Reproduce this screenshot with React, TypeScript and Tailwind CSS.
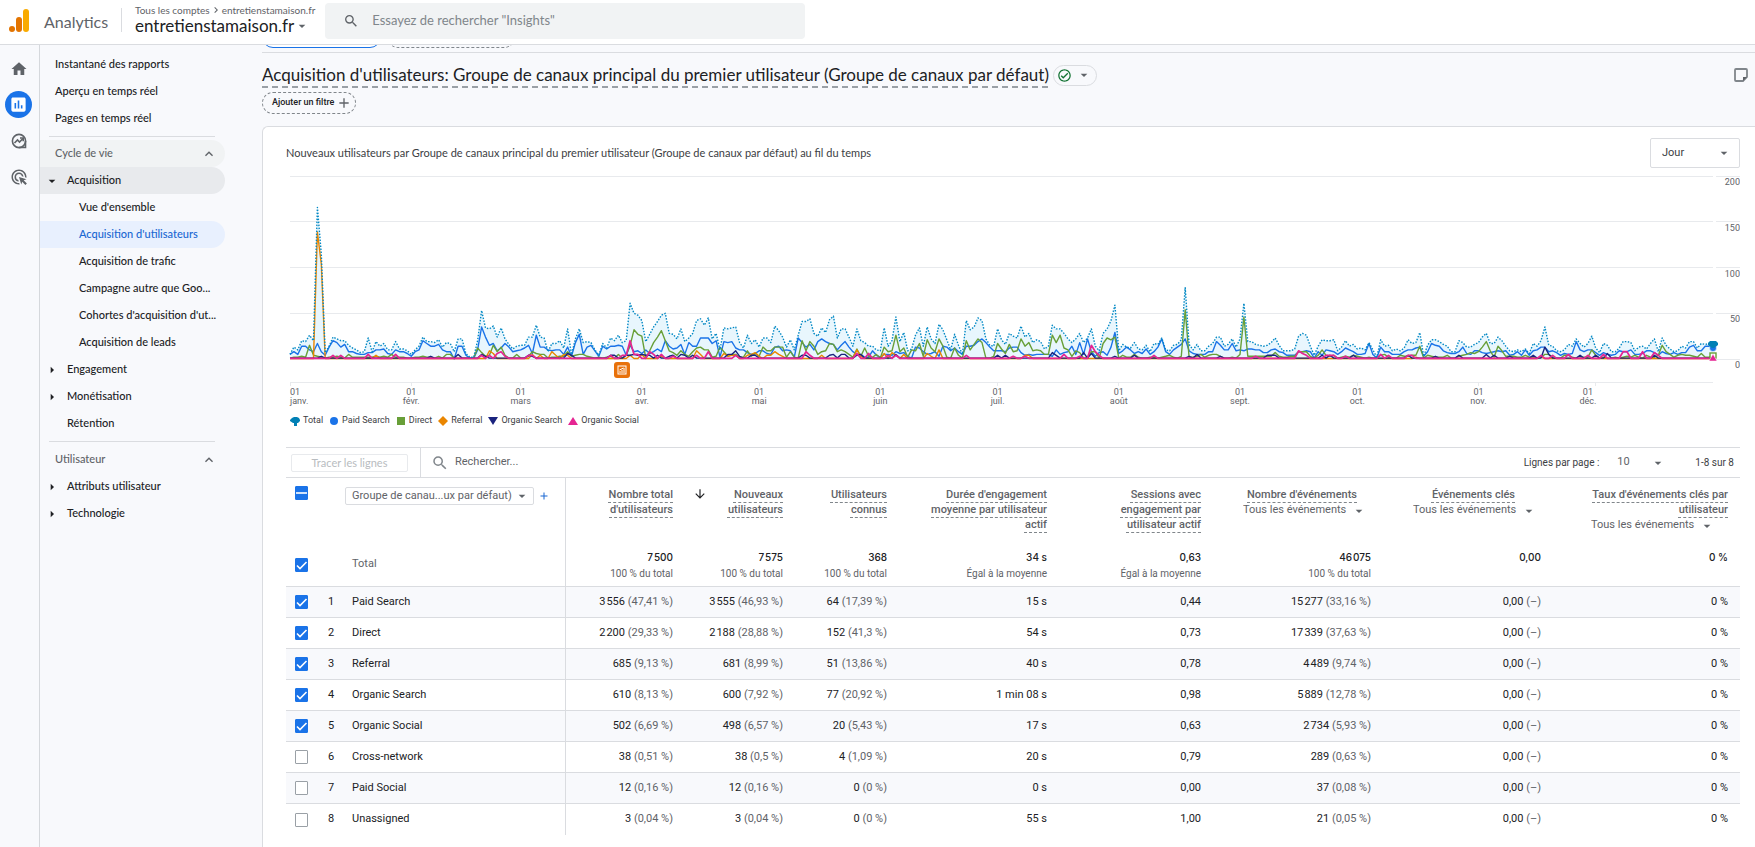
import React from 'react';
import {
  MdAdd,
  MdAdsClick,
  MdArrowDownward,
  MdArrowDropDown,
  MdArrowRight,
  MdHome,
  MdInsertChart,
  MdKeyboardArrowRight,
  MdKeyboardArrowUp,
  MdOutlineCheckCircle,
  MdSearch,
} from 'react-icons/md';
import clsx from 'clsx';

// ---------- chart data, one value per day from 1 January ----------

const TOTAL = [
  5, 13, 10, 20, 19, 26, 20, 166, 115, 7, 14, 24, 22, 20, 20, 15, 12, 10, 7, 8,
  23, 8, 19, 14, 17, 10, 10, 19, 11, 11, 9, 5, 10, 14, 24, 19, 19, 18, 21, 13,
  18, 17, 8, 22, 22, 6, 2, 2, 20, 53, 34, 33, 36, 24, 34, 22, 16, 11, 14, 15,
  15, 24, 24, 37, 24, 23, 8, 17, 17, 20, 12, 33, 5, 22, 33, 18, 19, 18, 10, 4,
  17, 12, 23, 20, 26, 18, 20, 61, 50, 48, 42, 19, 27, 35, 41, 48, 50, 28, 27, 22,
  33, 19, 23, 28, 42, 44, 37, 45, 22, 28, 10, 34, 33, 34, 35, 18, 12, 26, 17, 21,
  13, 23, 23, 18, 36, 31, 24, 13, 21, 10, 26, 41, 41, 44, 28, 25, 34, 29, 43, 47,
  23, 33, 33, 24, 14, 33, 20, 18, 14, 14, 10, 9, 34, 14, 20, 46, 19, 29, 9, 11,
  26, 34, 14, 35, 22, 17, 38, 32, 21, 10, 27, 15, 5, 42, 32, 35, 45, 42, 22, 15,
  14, 33, 21, 16, 28, 25, 23, 36, 24, 28, 18, 21, 19, 11, 14, 37, 33, 33, 28, 22,
  18, 22, 28, 18, 23, 33, 14, 9, 28, 33, 42, 59, 9, 16, 13, 12, 18, 11, 10, 15,
  8, 17, 16, 23, 10, 9, 15, 16, 21, 78, 16, 10, 16, 9, 9, 14, 17, 24, 24, 14,
  16, 22, 13, 22, 61, 19, 19, 16, 15, 14, 15, 18, 23, 15, 9, 9, 9, 11, 25, 28,
  26, 14, 4, 14, 21, 20, 20, 21, 9, 13, 20, 14, 16, 11, 12, 10, 18, 10, 2, 21,
  14, 15, 9, 11, 9, 12, 21, 17, 18, 29, 3, 15, 21, 21, 19, 16, 14, 8, 8, 20,
  18, 13, 13, 16, 18, 24, 28, 17, 17, 24, 20, 14, 9, 8, 10, 8, 11, 6, 17, 14,
  20, 35, 15, 14, 9, 8, 10, 16, 14, 22, 17, 13, 17, 25, 12, 7, 17, 15, 8, 8,
  12, 19, 19, 18, 9, 13, 14, 11, 17, 22, 8, 23, 15, 11, 8, 9, 14, 12, 19, 19,
  12, 17, 16, 17, 17,
];

const PAID_SEARCH = [
  5, 8, 5, 14, 14, 10, 8, 17, 8, 4, 13, 20, 18, 13, 16, 8, 8, 6, 5, 5,
  7, 7, 10, 10, 11, 6, 5, 10, 8, 8, 6, 3, 8, 10, 20, 17, 14, 14, 16, 10,
  8, 8, 0, 14, 14, 4, 1, 1, 10, 35, 24, 15, 17, 9, 12, 17, 13, 8, 9, 10,
  12, 15, 6, 26, 13, 13, 10, 9, 10, 10, 5, 13, 3, 18, 27, 5, 13, 15, 9, 3,
  14, 11, 14, 14, 15, 14, 4, 15, 8, 9, 6, 10, 6, 8, 11, 8, 20, 14, 11, 12,
  16, 5, 18, 14, 14, 23, 23, 23, 17, 20, 2, 19, 18, 19, 12, 10, 10, 7, 5, 6,
  9, 9, 6, 5, 13, 14, 9, 10, 9, 2, 23, 18, 13, 16, 10, 19, 22, 19, 17, 16,
  10, 15, 19, 13, 8, 5, 5, 2, 2, 9, 4, 2, 5, 5, 4, 8, 6, 7, 3, 1,
  13, 12, 8, 5, 6, 8, 3, 14, 13, 9, 12, 8, 5, 14, 14, 15, 19, 22, 18, 13,
  9, 9, 9, 8, 12, 13, 13, 7, 4, 5, 4, 5, 5, 5, 5, 3, 10, 5, 7, 8,
  14, 5, 18, 5, 22, 8, 3, 7, 8, 4, 13, 29, 6, 9, 13, 10, 6, 8, 6, 11,
  5, 8, 13, 22, 8, 5, 10, 13, 16, 22, 9, 6, 5, 5, 5, 8, 8, 19, 15, 10,
  10, 17, 9, 10, 9, 11, 11, 10, 10, 7, 7, 10, 11, 8, 7, 4, 4, 4, 8, 8,
  9, 8, 1, 8, 4, 10, 9, 8, 5, 8, 12, 10, 8, 5, 5, 6, 17, 5, 1, 13,
  8, 8, 5, 5, 5, 8, 10, 10, 12, 13, 3, 8, 17, 15, 14, 9, 7, 6, 6, 8,
  13, 6, 5, 9, 9, 7, 6, 7, 8, 9, 8, 9, 4, 5, 8, 4, 10, 4, 9, 10,
  13, 13, 8, 9, 7, 4, 6, 5, 6, 19, 10, 8, 10, 10, 7, 4, 7, 5, 4, 5,
  9, 8, 8, 10, 5, 5, 6, 9, 9, 7, 4, 8, 6, 5, 7, 5, 7, 7, 13, 15,
  9, 9, 14, 14, 12,
];

const DIRECT = [
  1, 2, 2, 3, 2, 15, 4, 3, 2, 1, 2, 2, 3, 2, 1, 5, 2, 2, 2, 2,
  2, 2, 3, 2, 3, 2, 5, 2, 2, 2, 1, 1, 2, 2, 3, 2, 2, 1, 3, 1,
  5, 5, 1, 1, 1, 1, 1, 1, 12, 7, 3, 4, 15, 8, 13, 4, 1, 1, 5, 1,
  1, 3, 8, 6, 5, 5, 1, 2, 2, 3, 3, 8, 3, 4, 5, 5, 3, 2, 1, 2,
  1, 2, 3, 1, 5, 1, 4, 15, 32, 27, 25, 1, 9, 18, 24, 31, 20, 9, 7, 4,
  9, 5, 3, 8, 12, 13, 10, 10, 2, 3, 13, 8, 3, 5, 5, 2, 2, 9, 3, 6,
  3, 13, 9, 9, 13, 13, 13, 2, 8, 2, 1, 20, 9, 19, 14, 5, 8, 9, 17, 16,
  8, 10, 8, 5, 2, 11, 3, 12, 3, 2, 5, 1, 13, 8, 9, 26, 8, 12, 2, 10,
  9, 17, 3, 21, 12, 8, 22, 14, 2, 1, 12, 4, 1, 20, 10, 16, 22, 18, 1, 1,
  3, 17, 11, 6, 16, 8, 9, 22, 14, 18, 9, 10, 9, 5, 5, 26, 18, 26, 12, 10,
  3, 9, 7, 1, 2, 8, 8, 1, 17, 23, 21, 24, 1, 4, 2, 2, 5, 2, 1, 1,
  2, 2, 1, 2, 3, 4, 2, 1, 3, 54, 2, 2, 3, 5, 2, 4, 5, 5, 3, 1,
  1, 2, 1, 5, 46, 3, 3, 3, 3, 3, 3, 3, 7, 3, 2, 2, 3, 3, 8, 8,
  8, 3, 1, 4, 10, 4, 3, 4, 1, 2, 3, 2, 4, 3, 2, 1, 2, 1, 1, 4,
  5, 2, 1, 1, 4, 3, 3, 4, 4, 14, 1, 4, 3, 2, 2, 2, 4, 1, 1, 3,
  4, 5, 7, 6, 8, 13, 19, 9, 2, 14, 9, 3, 3, 3, 2, 2, 4, 2, 2, 1,
  2, 5, 5, 2, 1, 1, 4, 4, 2, 1, 1, 2, 2, 10, 4, 1, 2, 1, 1, 2,
  1, 2, 3, 2, 4, 2, 1, 4, 2, 2, 4, 15, 8, 5, 2, 4, 5, 4, 4, 3,
  2, 6, 2, 2, 4,
];

// Small channels stay near zero, only the days with a peak are listed
function withPeaks(base: number, peaks: Record<number, number>) {
  return TOTAL.map((_, day) => peaks[day] ?? base);
}

const REFERRAL = withPeaks(0.6, {
  7: 139, 8: 104, 22: 4, 51: 9, 52: 6, 62: 5, 64: 4, 67: 8, 68: 4, 70: 5, 71: 4, 87: 4, 90: 5, 95: 3,
  104: 9, 105: 5, 111: 6, 112: 3, 113: 4, 114: 4, 117: 4, 118: 5, 119: 7, 120: 3, 122: 4, 123: 4,
  124: 8, 125: 5, 126: 3, 136: 4, 145: 10, 146: 3, 152: 6, 154: 7, 155: 4, 157: 5, 163: 6, 164: 3,
  166: 10, 188: 4, 189: 4, 288: 2, 320: 2,
});

const ORGANIC_SEARCH = withPeaks(1, {
  8: 3, 36: 3, 43: 5, 49: 5, 50: 3, 61: 4, 62: 3, 71: 6, 72: 4, 82: 4, 83: 4, 86: 4, 87: 4, 88: 5,
  89: 4, 90: 5, 91: 4, 92: 4, 94: 4, 97: 3, 98: 4, 100: 5, 101: 4, 103: 4, 112: 5, 113: 5, 114: 9,
  115: 3, 118: 4, 119: 4, 131: 4, 132: 4, 138: 4, 139: 5, 141: 5, 142: 5, 145: 4, 146: 5, 155: 5,
  181: 4, 183: 4, 195: 7, 196: 4, 203: 7, 205: 6, 211: 3, 216: 4, 230: 3, 232: 5, 238: 3, 250: 4,
  251: 4, 252: 4, 264: 4, 266: 4, 272: 4, 286: 4, 293: 3, 299: 4, 306: 5, 308: 4, 312: 3, 318: 4,
  321: 13, 322: 5, 330: 4, 334: 4, 337: 6, 349: 4,
});

const ORGANIC_SOCIAL = withPeaks(0.8, {
  11: 4, 13: 4, 20: 5, 27: 5, 49: 4, 51: 4, 53: 6, 54: 8, 55: 3, 61: 4, 62: 4, 82: 4, 85: 4, 86: 4,
  87: 20, 88: 5, 89: 5, 92: 8, 93: 5, 95: 5, 98: 3, 104: 4, 107: 8, 114: 4, 132: 8, 133: 4, 145: 6,
  148: 6, 153: 4, 155: 4, 173: 4, 185: 3, 188: 3, 198: 5, 202: 3, 205: 15, 206: 8, 207: 4, 221: 4,
  247: 3, 258: 9, 259: 6, 260: 4, 265: 4, 266: 4, 267: 4, 270: 3, 279: 5, 281: 4, 286: 4, 287: 4,
  320: 4, 323: 4, 327: 5, 332: 4, 336: 5, 341: 8, 342: 8, 346: 8, 349: 7, 350: 4,
});

// the last label is pulled to the left of its tick
const MONTHS = [
  { day: 0, label: 'janv.', at: 0 },
  { day: 31, label: 'févr.', at: 31 },
  { day: 59, label: 'mars', at: 59 },
  { day: 90, label: 'avr.', at: 90 },
  { day: 120, label: 'mai', at: 120 },
  { day: 151, label: 'juin', at: 151 },
  { day: 181, label: 'juil.', at: 181 },
  { day: 212, label: 'août', at: 212 },
  { day: 243, label: 'sept.', at: 243 },
  { day: 273, label: 'oct.', at: 273 },
  { day: 304, label: 'nov.', at: 304 },
  { day: 334, label: 'déc.', at: 332 },
];

const X0 = 4;
const X1 = 1427;
const ZERO = 191;
const px = (day: number) => X0 + (day * (X1 - X0)) / 364;
const py = (value: number) => ZERO - value * 0.9135;
const toPoints = (data: number[]) => data.map((v, i) => `${px(i).toFixed(1)},${py(v).toFixed(1)}`).join(' ');

function Chart() {
  return (
    <svg viewBox="0 0 1454 240" className="block w-full" role="img" aria-label="Nouveaux utilisateurs par jour">
      <g stroke="#e8eaed" strokeWidth="1" shapeRendering="crispEdges">
        {[0, 50, 100, 150, 200].map((v) => (
          <g key={v}>
            <line x1={X0} x2={X1} y1={py(v)} y2={py(v)} />
            <line x1={X1 + 3} x2={1454} y1={py(v)} y2={py(v)} />
          </g>
        ))}
        <line x1={X0} x2={X1} y1={214} y2={214} />
        {MONTHS.map((m) => (
          <line key={m.day} x1={px(m.day)} x2={px(m.day)} y1={214} y2={218} />
        ))}
      </g>
      <polygon points={`${X0},${ZERO} ${toPoints(TOTAL)} ${X1},${ZERO}`} fill="#e8f6fd" />
      <g fill="none" strokeWidth="1.4" strokeLinejoin="round">
        <polyline points={toPoints(PAID_SEARCH)} stroke="#1a73e8" />
        <polyline points={toPoints(DIRECT)} stroke="#689f38" />
        <polyline points={toPoints(REFERRAL)} stroke="#ea8600" />
        <polyline points={toPoints(ORGANIC_SEARCH)} stroke="#1a237e" />
        <polyline points={toPoints(ORGANIC_SOCIAL)} stroke="#e52592" strokeWidth="1.7" />
        <polyline points={toPoints(TOTAL)} stroke="#0288c4" strokeWidth="1.4" strokeDasharray="1.5 1.5" />
      </g>

      {/* last day markers */}
      <circle cx="1427" cy="180" r="3.500" fill="#1a73e8" stroke="#fff" strokeWidth="0.6" />
      <path d="M1424 173h6l2 2v2l-4 3h-2l-4-3v-2z" fill="#0180b5" />
      <rect x="1424" y="185" width="6" height="5" fill="#fff" stroke="#689f38" strokeWidth="1.4" />
      <path d="M1427 186l4 7h-8z" fill="#e52592" stroke="#fff" strokeWidth="0.5" />

      {/* annotation pin */}
      <rect x="328" y="194" width="16" height="16" rx="3" fill="#e8710a" />
      <rect x="332" y="198" width="8" height="8" fill="none" stroke="#fff" strokeWidth="1" />
      <path d="M334 205v-2M336 205v-3M338 205v-5M333.500 202l4-2" stroke="#fff" strokeWidth="1" />

      <g className="fill-[#5f6368] font-['Roboto',sans-serif] text-[9px]">
        {[0, 50, 100, 150, 200].map((v) => (
          <text key={v} x="1454" y={py(v) + 9} textAnchor="end">{v}</text>
        ))}
        {MONTHS.map((m) => (
          <text key={m.day} textAnchor={m.day === 0 ? 'start' : 'middle'}>
            <tspan x={px(m.at)} y={227}>01</tspan>
            <tspan x={px(m.at)} y={236}>{m.label}</tspan>
          </text>
        ))}
      </g>
    </svg>
  );
}

const LEGEND = [
  { name: 'Total', color: '#0180b5', path: 'M2 2L4 1h3l2 1 1 2v1L8 7H7v3H4V7H3L0 5V4z' },
  { name: 'Paid Search', color: '#1a73e8', path: 'M5 1a4 4 0 1 1 0 8a4 4 0 1 1 0-8z' },
  { name: 'Direct', color: '#689f38', path: 'M1 1h8v8H1z' },
  { name: 'Referral', color: '#ea8600', path: 'M5 0l5 5-5 5-5-5z' },
  { name: 'Organic Search', color: '#1a237e', path: 'M0 1h10L5 9z' },
  { name: 'Organic Social', color: '#e52592', path: 'M5 1l5 8H0z' },
];

// ---------- header ----------

function Header() {
  return (
    <header className="flex h-[45px] items-center border-b border-[#dadce0] bg-white font-['Lato',sans-serif]">
      <svg viewBox="0 0 20 23" className="mb-1 ml-[9px] h-[23px] w-5" aria-hidden="true">
        <rect x="14" y="0" width="6" height="23" rx="3" fill="#f9ab00" />
        <rect x="7" y="8" width="6" height="15" rx="3" fill="#e37400" />
        <circle cx="3" cy="20" r="3" fill="#e37400" />
      </svg>
      <span className="ml-[15px] w-[77px] text-[16px] text-[#5f6368]">Analytics</span>
      <div className="mb-1 h-6 border-l border-[#dadce0]" />
      <div className="mb-1 ml-[13px] w-[190px]">
        <div className="flex items-center text-[10px] leading-3 text-[#5f6368]">
          <a href="#comptes">Tous les comptes</a>
          <MdKeyboardArrowRight className="size-3" />
          <a href="#propriete">entretienstamaison.fr</a>
        </div>
        <button type="button" className="flex items-center text-[17px] leading-5 text-[#202124]">
          entretienstamaison.fr
          <MdArrowDropDown className="size-4 text-[#5f6368]" />
        </button>
      </div>
      <label className="mb-[3px] flex h-9 w-[480px] items-center rounded bg-[#f1f3f4]">
        <MdSearch className="ml-[18px] size-[18px] text-[#5f6368]" />
        <input
          type="search"
          aria-label="Rechercher"
          placeholder={'Essayez de rechercher "Insights"'}
          className="ml-[13px] w-full bg-transparent text-[13px] text-[#202124] outline-none placeholder:text-[#80868b]"
        />
      </label>
    </header>
  );
}

function ExploreIcon() {
  return (
    <svg viewBox="0 0 16 16" className="size-4" fill="none" stroke="#5f6368" strokeWidth="1.6" aria-hidden="true">
      <circle cx="8" cy="8" r="6.600" />
      <path d="M14.500 8v6.500H8" />
      <path d="M3.500 10l3-3 2 2 3.500-3.500" />
      <path d="M9 5h3.200v3.200" />
    </svg>
  );
}

function Rail() {
  return (
    <nav aria-label="Sections" className="flex w-10 shrink-0 flex-col items-center gap-[9px] border-r border-[#d5d8dc] pt-[10px] pr-0.5 text-[#5f6368]">
      <a href="#accueil" aria-label="Accueil" className="grid size-[27px] place-items-center">
        <MdHome className="size-[18px]" />
      </a>
      <a href="#rapports" aria-label="Rapports" className="grid size-[27px] place-items-center rounded-full bg-[#1a73e8] text-white">
        <MdInsertChart className="size-[19px]" />
      </a>
      <a href="#explorer" aria-label="Explorer" className="grid size-[27px] place-items-center">
        <ExploreIcon />
      </a>
      <a href="#publicite" aria-label="Publicité" className="grid size-[27px] place-items-center">
        <MdAdsClick className="size-[18px]" />
      </a>
    </nav>
  );
}

// ---------- sidebar ----------

const ROW = 'flex h-[27px] w-[185px] items-center rounded-r-full text-left';

function SideLink({ label, active }: { label: string; active?: boolean }) {
  return (
    <a href="#rapport" className={clsx(ROW, 'pl-[39px] whitespace-nowrap', active ? 'bg-[#e8f0fe] text-[#1967d2]' : 'text-[#202124]')}>
      {label}
    </a>
  );
}

function SideGroup({ label, open, leaf }: { label: string; open?: boolean; leaf?: boolean }) {
  return (
    <button type="button" className={clsx(ROW, 'pl-1 text-[#202124]', open && 'bg-[#e8eaed]')}>
      <span className="grid w-[23px] justify-start">
        {!leaf && (open ? <MdArrowDropDown className="size-4" /> : <MdArrowRight className="size-4" />)}
      </span>
      {label}
    </button>
  );
}

function SideHeading({ label, shaded }: { label: string; shaded?: boolean }) {
  return (
    <button type="button" className={clsx(ROW, 'justify-between pr-2 pl-[15px] text-[#5f6368]', shaded && 'bg-[#f1f3f4]')}>
      {label}
      <MdKeyboardArrowUp className="size-4" />
    </button>
  );
}

function Sidebar() {
  return (
    <nav aria-label="Rapports" className="w-[222px] shrink-0 pt-[6px] font-['Lato',sans-serif] text-[11px] font-medium">
      {['Instantané des rapports', 'Aperçu en temps réel', 'Pages en temps réel'].map((label) => (
        <a key={label} href="#rapport" className={clsx(ROW, 'pl-[15px] text-[#202124]')}>{label}</a>
      ))}
      <hr className="mt-1 mb-[3px] ml-[9px] w-[166px] border-[#dadce0]" />
      <SideHeading label="Cycle de vie" shaded />
      <SideGroup label="Acquisition" open />
      <SideLink label="Vue d'ensemble" />
      <SideLink label="Acquisition d'utilisateurs" active />
      <SideLink label="Acquisition de trafic" />
      <SideLink label="Campagne autre que Goo..." />
      <SideLink label="Cohortes d'acquisition d'ut..." />
      <SideLink label="Acquisition de leads" />
      <SideGroup label="Engagement" />
      <SideGroup label="Monétisation" />
      <SideGroup label="Rétention" leaf />
      <hr className="mt-1 mb-1 ml-[9px] w-[166px] border-[#dadce0]" />
      <SideHeading label="Utilisateur" />
      <SideGroup label="Attributs utilisateur" />
      <SideGroup label="Technologie" />
    </nav>
  );
}

// ---------- table ----------

type CheckProps = { label: string; state: 'on' | 'off' | 'mixed' };

function Check({ label, state }: CheckProps) {
  return (
    <span className="grid h-[14px] w-[13px]">
      <input
        type="checkbox"
        aria-label={label}
        defaultChecked={state !== 'off'}
        className="col-start-1 row-start-1 h-[14px] w-[13px] appearance-none rounded-[1px] border border-[#9aa0a6] bg-white checked:border-[#1a73e8] checked:bg-[#1a73e8]"
      />
      {state !== 'off' && (
        <svg viewBox="0 0 13 14" className="pointer-events-none col-start-1 row-start-1 h-[14px] w-[13px]" fill="none" stroke="#fff" strokeWidth="1.6">
          <path d={state === 'mixed' ? 'M1 7h11' : 'M2 7.500l3 3L11.500 4'} />
        </svg>
      )}
    </span>
  );
}

type DropdownProps = { label: string; value: string; className: string; caret?: string };

function Dropdown({ label, value, className, caret = 'right-0' }: DropdownProps) {
  return (
    <span className="relative inline-flex items-center">
      <select aria-label={label} className={clsx('appearance-none outline-none', className)}>
        <option>{value}</option>
      </select>
      <MdArrowDropDown className={clsx('pointer-events-none absolute size-4 text-[#5f6368]', caret)} />
    </span>
  );
}

const COLUMNS = [
  { lines: ['Nombre total', "d'utilisateurs"], total: '7\u200a500', sub: '100 % du total', width: 'w-[119px]' },
  { lines: ['Nouveaux', 'utilisateurs'], total: '7\u200a575', sub: '100 % du total', width: 'w-[110px]', sorted: true },
  { lines: ['Utilisateurs', 'connus'], total: '368', sub: '100 % du total', width: 'w-[104px]' },
  { lines: ["Durée d'engagement", 'moyenne par utilisateur', 'actif'], total: '34 s', sub: 'Égal à la moyenne', width: 'w-[160px]' },
  { lines: ['Sessions avec', 'engagement par', 'utilisateur actif'], total: '0,63', sub: 'Égal à la moyenne', width: 'w-[154px]' },
  { lines: ["Nombre d'événements"], total: '46\u200a075', sub: '100 % du total', width: 'w-[170px]', titlePad: 'pr-[14px]', events: 'pr-1' },
  { lines: ['Événements clés'], total: '0,00', sub: '', width: 'w-[170px]', titlePad: 'pr-[26px]', events: 'pr-1' },
  { lines: ["Taux d'événements clés par", 'utilisateur'], total: '0 %', sub: '', width: '', events: 'pr-[13px]' },
];

const ROWS = [
  { name: 'Paid Search', cells: ['3\u200a556 (47,41 %)', '3\u200a555 (46,93 %)', '64 (17,39 %)', '15 s', '0,44', '15\u200a277 (33,16 %)', '0,00 (–)', '0 %'] },
  { name: 'Direct', cells: ['2\u200a200 (29,33 %)', '2\u200a188 (28,88 %)', '152 (41,3 %)', '54 s', '0,73', '17\u200a339 (37,63 %)', '0,00 (–)', '0 %'] },
  { name: 'Referral', cells: ['685 (9,13 %)', '681 (8,99 %)', '51 (13,86 %)', '40 s', '0,78', '4\u200a489 (9,74 %)', '0,00 (–)', '0 %'] },
  { name: 'Organic Search', cells: ['610 (8,13 %)', '600 (7,92 %)', '77 (20,92 %)', '1 min 08 s', '0,98', '5\u200a889 (12,78 %)', '0,00 (–)', '0 %'] },
  { name: 'Organic Social', cells: ['502 (6,69 %)', '498 (6,57 %)', '20 (5,43 %)', '17 s', '0,63', '2\u200a734 (5,93 %)', '0,00 (–)', '0 %'] },
  { name: 'Cross-network', cells: ['38 (0,51 %)', '38 (0,5 %)', '4 (1,09 %)', '20 s', '0,79', '289 (0,63 %)', '0,00 (–)', '0 %'] },
  { name: 'Paid Social', cells: ['12 (0,16 %)', '12 (0,16 %)', '0 (0 %)', '0 s', '0,00', '37 (0,08 %)', '0,00 (–)', '0 %'] },
  { name: 'Unassigned', cells: ['3 (0,04 %)', '3 (0,04 %)', '0 (0 %)', '55 s', '1,00', '21 (0,05 %)', '0,00 (–)', '0 %'] },
];

function Cell({ text }: { text: string }) {
  const [value, share] = text.split(' (');
  return (
    <>
      {value}
      {share && <span className="text-[#5f6368]"> ({share}</span>}
    </>
  );
}

function DataTable() {
  return (
    <table className="w-full table-fixed border-separate border-spacing-0 font-['Roboto',sans-serif] text-[11px] text-[#202124]">
      <colgroup>
        <col className="w-[34px]" />
        <col className="w-[28px]" />
        <col className="w-[218px]" />
        {COLUMNS.map((c, i) => (
          <col key={i} className={c.width} />
        ))}
      </colgroup>
      <thead>
        <tr className="h-[65px] align-top">
          <th className="pt-2 pl-[9px]"><Check label="Tout sélectionner" state="mixed" /></th>
          <th colSpan={2} className="border-r border-[#dadce0] pt-[9px] pl-[25px] text-left font-normal">
            <div className="flex items-center gap-1">
              <Dropdown
                label="Dimension"
                value="Groupe de canau...ux par défaut)"
                className="h-[18px] w-[189px] rounded-xs border border-[#dadce0] bg-white pl-[6px] text-[11px] text-[#5f6368]"
                caret="right-1"
              />
              <button type="button" aria-label="Ajouter une dimension" className="text-[#1967d2]">
                <MdAdd className="size-3" />
              </button>
            </div>
          </th>
          {COLUMNS.map((c, i) => (
            <th key={i} scope="col" className="pt-[9px] pr-3 text-right font-medium text-[#5f6368]">
              <div className="flex items-start justify-between">
                <span>{c.sorted && <MdArrowDownward className="ml-2 size-[14px] text-[#202124]" />}</span>
                <span className={clsx('leading-[15px] whitespace-nowrap underline decoration-[#80868b] decoration-dashed decoration-1 underline-offset-4 [text-decoration-skip-ink:none]', c.titlePad)}>
                  {c.lines.map((line) => (
                    <span key={line} className="block">{line}</span>
                  ))}
                </span>
              </div>
              {c.events && (
                <div className={clsx('flex justify-end font-normal', c.events)}>
                  <Dropdown label={c.lines[0]} value="Tous les événements" className="h-[17px] bg-transparent pr-5 text-[11px] text-[#5f6368]" />
                </div>
              )}
            </th>
          ))}
        </tr>
      </thead>
      <tbody>
        <tr className="h-[44px]">
          <td className="border-b border-[#dadce0] pl-[9px]"><Check label="Total" state="on" /></td>
          <td colSpan={2} className="border-r border-b border-[#dadce0] pl-8 text-[#5f6368]">Total</td>
          {COLUMNS.map((c, i) => (
            <td key={i} className="border-b border-[#dadce0] pt-[6px] pr-3 text-right align-top">
              <div className="font-['Inter',sans-serif] text-[10px] leading-4 font-medium">{c.total}</div>
              <div className="text-[10px] leading-[18px] text-[#5f6368]">{c.sub}</div>
            </td>
          ))}
        </tr>
        {ROWS.map((row, r) => {
          const line = r < ROWS.length - 1 && 'border-b border-[#dadce0]';
          return (
            <tr key={row.name} className={clsx('h-[31px]', r % 2 === 0 && 'bg-[#f8f9fc]')}>
              <td className={clsx('pl-[9px]', line)}><Check label={row.name} state={r < 5 ? 'on' : 'off'} /></td>
              <td className={clsx('pl-2', line)}>{r + 1}</td>
              <td className={clsx('border-r border-r-[#dadce0] pl-1', line)}>{row.name}</td>
              {row.cells.map((text, i) => (
                <td key={i} className={clsx('pr-3 text-right whitespace-nowrap', line)}><Cell text={text} /></td>
              ))}
            </tr>
          );
        })}
      </tbody>
    </table>
  );
}

function TableToolbar() {
  return (
    <div className="flex h-[31px] items-stretch border-y border-[#dadce0] font-['Roboto',sans-serif] text-[11px] text-[#5f6368]">
      <div className="flex w-[135px] items-center border-r border-[#dadce0] pl-[5px]">
        <button type="button" disabled className="h-[18px] w-[117px] rounded-xs border border-[#e8eaed] font-['Lato',sans-serif] leading-none text-[#b8bcc0]">
          Tracer les lignes
        </button>
      </div>
      <label className="flex flex-1 items-center">
        <MdSearch className="ml-[10px] size-[18px] text-[#80868b]" />
        <input type="text" aria-label="Rechercher dans le tableau" placeholder="Rechercher..." className="ml-[6px] w-60 outline-none placeholder:text-[#5f6368]" />
      </label>
      <div className="flex items-center pr-[6px] text-[10px] text-[#3c4043]">
        <span>Lignes par page :</span>
        <span className="mr-[29px] ml-[18px]">
          <Dropdown label="Lignes par page" value="10" className="w-[49px] bg-white text-[11px] text-[#5f6368]" />
        </span>
        <span>1-8 sur 8</span>
      </div>
    </div>
  );
}

// ---------- page ----------

function Report() {
  return (
    <main className="flex min-w-0 flex-1 flex-col">
      <div className="flex h-2 items-end gap-[6px] overflow-hidden border-b border-[#dadce0] pb-1">
        <div className="h-[22px] w-[119px] shrink-0 rounded-full border border-[#1a73e8] bg-white" />
        <div className="h-[22px] w-[128px] shrink-0 rounded-full border border-dashed border-[#80868b]" />
      </div>

      <div className="flex items-center justify-between pt-[10px] pr-[7px]">
        <div className="flex items-center gap-1">
          <h1 className="font-['Lato',sans-serif] text-[17px] leading-6 whitespace-nowrap text-[#202124] underline decoration-[#9aa0a6] decoration-dashed decoration-2 underline-offset-[5px] [text-decoration-skip-ink:none]">
            Acquisition d'utilisateurs: Groupe de canaux principal du premier utilisateur (Groupe de canaux par défaut)
          </h1>
          <button type="button" aria-label="État des données" className="flex h-[21px] w-[44px] items-center justify-center gap-1 rounded-full border border-[#dadce0]">
            <MdOutlineCheckCircle className="size-[15px] text-[#137333]" />
            <MdArrowDropDown className="size-4 text-[#5f6368]" />
          </button>
        </div>
        <button type="button" aria-label="Annotations">
          <svg viewBox="0 0 14 14" className="size-[14px]" aria-hidden="true">
            <path d="M2 1h10a1 1 0 0 1 1 1v7l-4 4H2a1 1 0 0 1-1-1V2a1 1 0 0 1 1-1z" fill="none" stroke="#80868b" strokeWidth="1.8" />
            <path d="M9 13V9h4z" fill="#5f6368" />
          </svg>
        </button>
      </div>

      <button type="button" className="mt-[5px] flex h-[22px] w-[94px] items-center justify-between rounded-full border border-dashed border-[#80868b] pr-[3px] pl-[9px] font-['Roboto',sans-serif] text-[9px] font-medium text-[#202124]">
        Ajouter un filtre
        <MdAdd className="size-4 text-[#5f6368]" />
      </button>

      <section className="mt-3 flex-1 rounded-tl-md border-t border-l border-[#dadce0] bg-white pt-[11px] pr-[15px] pb-3 pl-[23px]">
        <div className="flex h-[30px] items-center justify-between">
          <h2 className="font-['Lato',sans-serif] text-[11px] text-[#3c4043]">
            Nouveaux utilisateurs par Groupe de canaux principal du premier utilisateur (Groupe de canaux par défaut) au fil du temps
          </h2>
          <Dropdown
            label="Granularité"
            value="Jour"
            className="h-[30px] w-[90px] rounded-xs border border-[#dadce0] bg-white pl-[11px] font-['Roboto',sans-serif] text-[11px] text-[#3c4043]"
            caret="right-2"
          />
        </div>
        <Chart />
        <ul className="mb-[13px] flex h-[26px] items-center gap-[6px] pl-1 font-['Roboto',sans-serif] text-[9px] text-[#3c4043]">
          {LEGEND.map((item) => (
            <li key={item.name} className="flex items-center gap-[3px]">
              <svg viewBox="0 0 10 10" className="size-[10px]" aria-hidden="true"><path d={item.path} fill={item.color} /></svg>
              {item.name}
            </li>
          ))}
        </ul>
        <TableToolbar />
        <DataTable />
      </section>
    </main>
  );
}

export default function App() {
  return (
    <div className="flex min-h-screen flex-col bg-[#f8f9fc]">
      <Header />
      <div className="flex flex-1">
        <Rail />
        <Sidebar />
        <Report />
      </div>
    </div>
  );
}
